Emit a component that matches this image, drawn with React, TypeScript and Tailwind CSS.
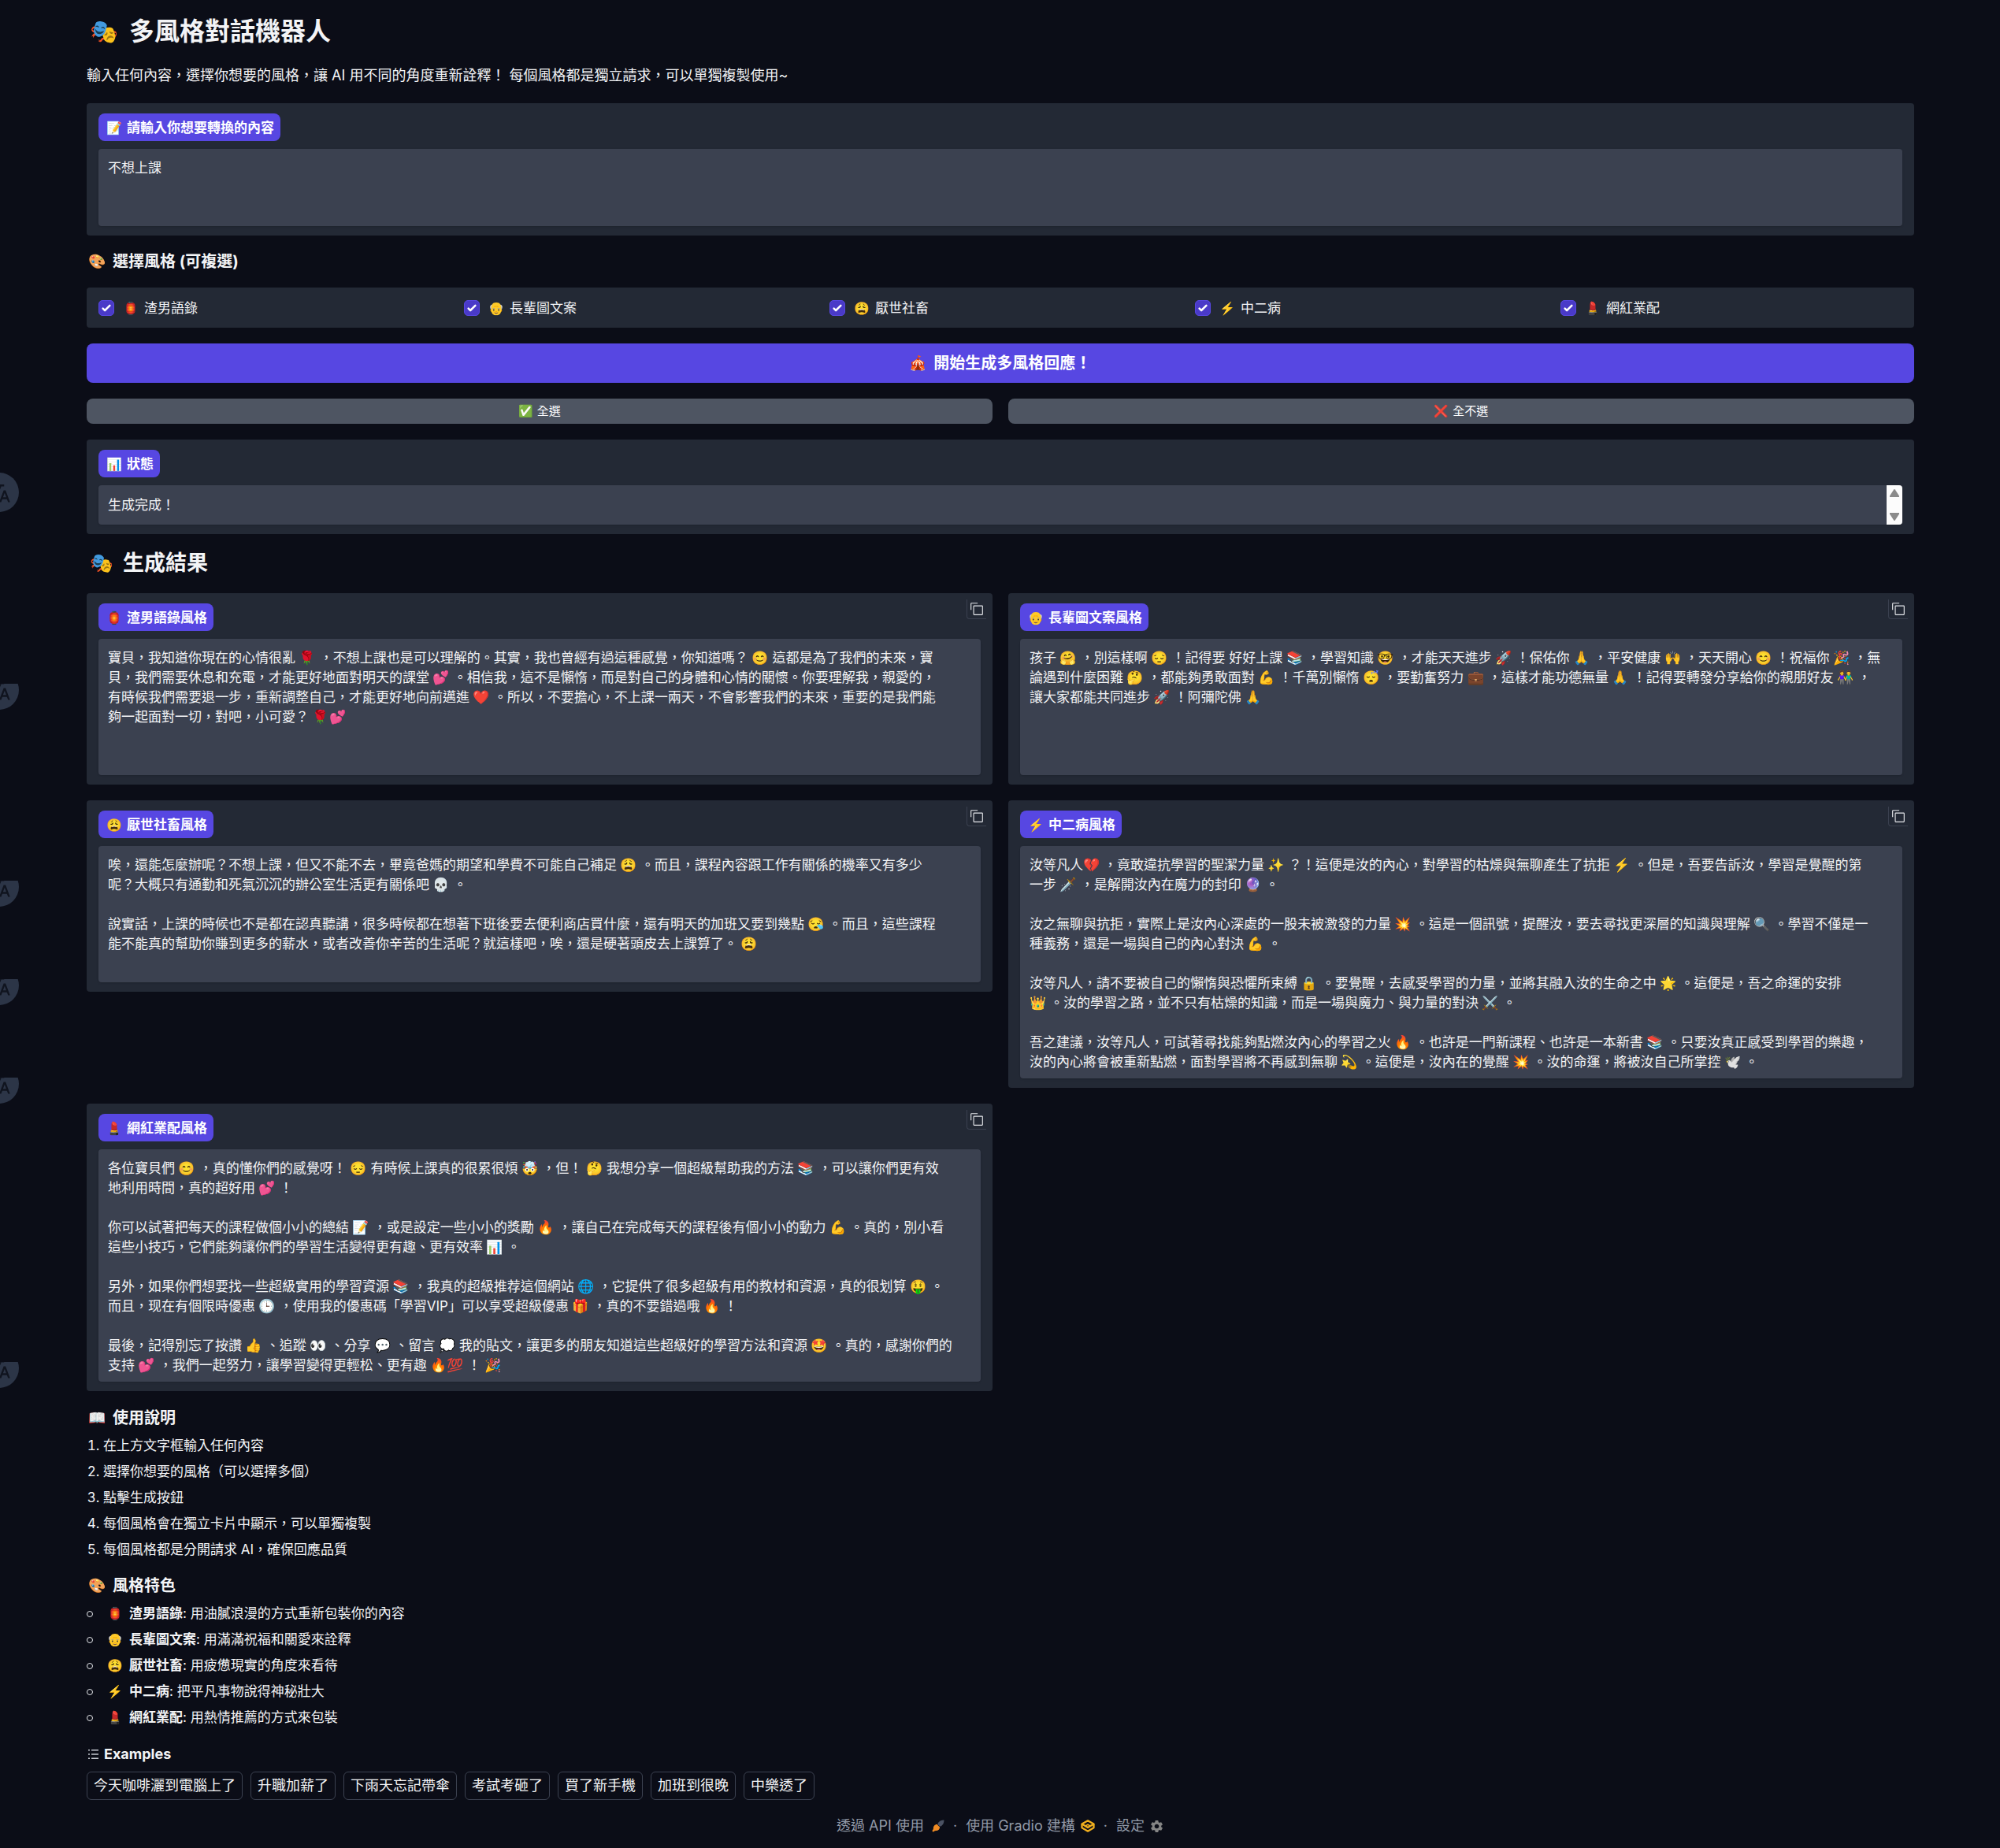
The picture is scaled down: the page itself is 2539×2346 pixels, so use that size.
import type { ReactNode } from 'react';
import { MdTranslate, MdSettings } from 'react-icons/md';

const STYLES = [
  { emoji: '🏮', name: '渣男語錄', note: '用油膩浪漫的方式重新包裝你的內容' },
  { emoji: '👴', name: '長輩圖文案', note: '用滿滿祝福和關愛來詮釋' },
  { emoji: '😩', name: '厭世社畜', note: '用疲憊現實的角度來看待' },
  { emoji: '⚡', name: '中二病', note: '把平凡事物說得神秘壯大' },
  { emoji: '💄', name: '網紅業配', note: '用熱情推薦的方式來包裝' },
];

const RESULTS = [
  `寶貝，我知道你現在的心情很亂 🌹 ，不想上課也是可以理解的。其實，我也曾經有過這種感覺，你知道嗎？ 😊 這都是為了我們的未來，寶
貝，我們需要休息和充電，才能更好地面對明天的課堂 💕 。相信我，這不是懶惰，而是對自己的身體和心情的關懷。你要理解我，親愛的，
有時候我們需要退一步，重新調整自己，才能更好地向前邁進 ❤️ 。所以，不要擔心，不上課一兩天，不會影響我們的未來，重要的是我們能
夠一起面對一切，對吧，小可愛？ 🌹💕`,
  `孩子 🤗 ，別這樣啊 😔 ！記得要 好好上課 📚 ，學習知識 🤓 ，才能天天進步 🚀 ！保佑你 🙏 ，平安健康 🙌 ，天天開心 😊 ！祝福你 🎉 ，無
論遇到什麼困難 🤔 ，都能夠勇敢面對 💪 ！千萬別懶惰 😴 ，要勤奮努力 💼 ，這樣才能功德無量 🙏 ！記得要轉發分享給你的親朋好友 👫 ，
讓大家都能共同進步 🚀 ！阿彌陀佛 🙏`,
  `唉，還能怎麼辦呢？不想上課，但又不能不去，畢竟爸媽的期望和學費不可能自己補足 😩 。而且，課程內容跟工作有關係的機率又有多少
呢？大概只有通勤和死氣沉沉的辦公室生活更有關係吧 💀 。

說實話，上課的時候也不是都在認真聽講，很多時候都在想著下班後要去便利商店買什麼，還有明天的加班又要到幾點 😪 。而且，這些課程
能不能真的幫助你賺到更多的薪水，或者改善你辛苦的生活呢？就這樣吧，唉，還是硬著頭皮去上課算了。 😩`,
  `汝等凡人💔 ，竟敢違抗學習的聖潔力量 ✨ ？！這便是汝的內心，對學習的枯燥與無聊產生了抗拒 ⚡ 。但是，吾要告訴汝，學習是覺醒的第
一步 🗡️ ，是解開汝內在魔力的封印 🔮 。

汝之無聊與抗拒，實際上是汝內心深處的一股未被激發的力量 💥 。這是一個訊號，提醒汝，要去尋找更深層的知識與理解 🔍 。學習不僅是一
種義務，還是一場與自己的內心對決 💪 。

汝等凡人，請不要被自己的懶惰與恐懼所束縛 🔒 。要覺醒，去感受學習的力量，並將其融入汝的生命之中 🌟 。這便是，吾之命運的安排
👑 。汝的學習之路，並不只有枯燥的知識，而是一場與魔力、與力量的對決 ⚔️ 。

吾之建議，汝等凡人，可試著尋找能夠點燃汝內心的學習之火 🔥 。也許是一門新課程、也許是一本新書 📚 。只要汝真正感受到學習的樂趣，
汝的內心將會被重新點燃，面對學習將不再感到無聊 💫 。這便是，汝內在的覺醒 💥 。汝的命運，將被汝自己所掌控 🕊️ 。`,
  `各位寶貝們 😊 ，真的懂你們的感覺呀！ 😔 有時候上課真的很累很煩 🤯 ，但！ 🤔 我想分享一個超級幫助我的方法 📚 ，可以讓你們更有效
地利用時間，真的超好用 💕 ！

你可以試著把每天的課程做個小小的總結 📝 ，或是設定一些小小的獎勵 🔥 ，讓自己在完成每天的課程後有個小小的動力 💪 。真的，別小看
這些小技巧，它們能夠讓你們的學習生活變得更有趣、更有效率 📊 。

另外，如果你們想要找一些超級實用的學習資源 📚 ，我真的超級推荐這個網站 🌐 ，它提供了很多超級有用的教材和資源，真的很划算 🤑 。
而且，现在有個限時優惠 🕒 ，使用我的優惠碼「學習VIP」可以享受超級優惠 🎁 ，真的不要錯過哦 🔥 ！

最後，記得別忘了按讚 👍 、追蹤 👀 、分享 💬 、留言 💭 我的貼文，讓更多的朋友知道這些超級好的學習方法和資源 🤩 。真的，感謝你們的
支持 💕 ，我們一起努力，讓學習變得更輕松、更有趣 🔥💯 ！ 🎉`,
];

const STEPS = [
  '在上方文字框輸入任何內容',
  '選擇你想要的風格（可以選擇多個）',
  '點擊生成按鈕',
  '每個風格會在獨立卡片中顯示，可以單獨複製',
  '每個風格都是分開請求 AI，確保回應品質',
];

const EXAMPLES = ['今天咖啡灑到電腦上了', '升職加薪了', '下雨天忘記帶傘', '考試考砸了', '買了新手機', '加班到很晚', '中樂透了'];

function Emoji({ children }: { children: ReactNode }) {
  return <span className="flex w-6 shrink-0 justify-center text-[16px] font-normal">{children}</span>;
}

function Card({ id, emoji, label, children, copy }: { id: string; emoji: string; label: string; children: ReactNode; copy?: boolean }) {
  return (
    <div className="relative rounded bg-[#232935] px-[15px] pt-[13px] pb-3">
      <label htmlFor={id} className="flex h-[35px] w-fit items-center gap-1 rounded-lg bg-[#5747e2] px-2 text-[17px] leading-[24px] font-bold text-white">
        <Emoji>{emoji}</Emoji>
        {label}
      </label>
      <div className="mt-[10px] flex overflow-hidden rounded bg-[#3b4150] shadow-sm">{children}</div>
      {copy && (
        <button type="button" aria-label="複製" className="absolute top-2 right-2 flex size-[25px] items-center justify-center rounded-bl border-b border-l border-[#3b4150]">
          <svg viewBox="0 0 32 32" className="size-[18px] fill-[#e5e7eb]">
            <path d="M28,10V28H10V10H28m0-2H10a2,2,0,0,0-2,2V28a2,2,0,0,0,2,2H28a2,2,0,0,0,2-2V10a2,2,0,0,0-2-2Z" />
            <path d="M4,18H2V4A2,2,0,0,1,4,2H18V4H4Z" />
          </svg>
        </button>
      )}
    </div>
  );
}

function SubHeading({ emoji, children }: { emoji: string; children: ReactNode }) {
  return (
    <h3 className="flex items-center gap-[5px] text-[20px] leading-[24px] font-bold">
      <span className="flex w-7 justify-center text-[18px] font-normal">{emoji}</span>
      {children}
    </h3>
  );
}

function TranslateBadge({ place, clipped }: { place: string; clipped?: boolean }) {
  return (
    <div className={`absolute left-0 flex w-6 items-end justify-end overflow-hidden ${clipped ? 'h-[33px]' : 'h-[50px]'} ${place}`}>
      <span className="flex size-[50px] shrink-0 items-center justify-center rounded-full bg-[#2c3547] text-[#10141f]">
        <MdTranslate size={30} />
      </span>
    </div>
  );
}

export default function App() {
  return (
    <div className="relative min-h-screen overflow-hidden bg-[#0b0d17] pt-5 pr-[109px] pb-4 pl-[110px] font-['Inter','Noto_Sans_CJK_TC','Noto_Color_Emoji',sans-serif] text-[17px] leading-[24px] text-[#f3f4f6]">
      <TranslateBadge place="top-[600px]" />
      <TranslateBadge clipped place="top-[868px]" />
      <TranslateBadge clipped place="top-[1118px]" />
      <TranslateBadge clipped place="top-[1243px]" />
      <TranslateBadge clipped place="top-[1368px]" />
      <TranslateBadge clipped place="top-[1729px]" />

      <h1 className="flex items-center gap-[10px] text-[32px] leading-[40px] font-bold">
        <span className="flex w-11 justify-center text-[29px] font-normal">🎭</span>
        多風格對話機器人
      </h1>
      <p className="mt-6 text-[18px]">輸入任何內容，選擇你想要的風格，讓 AI 用不同的角度重新詮釋！ 每個風格都是獨立請求，可以單獨複製使用~</p>

      <div className="mt-[23px]">
        <Card id="source" emoji="📝" label="請輸入你想要轉換的內容">
          <textarea id="source" defaultValue="不想上課" className="h-[98px] flex-1 resize-none overflow-hidden px-3 pt-3 pb-2 leading-[25px] outline-none" />
        </Card>
      </div>

      <div className="mt-[21px]">
        <SubHeading emoji="🎨">選擇風格 (可複選)</SubHeading>
      </div>
      <div className="mt-[21px] grid h-[51px] grid-cols-5 items-center rounded bg-[#232935]">
        {STYLES.map((s) => (
          <label key={s.name} className="flex items-center pl-[15px]">
            <span className="grid size-5 place-items-center">
              <input type="checkbox" defaultChecked className="peer col-start-1 row-start-1 size-5 appearance-none rounded-[5px] border border-[#5747e2] checked:bg-[#4a3ac8]" />
              <svg viewBox="0 0 16 16" className="pointer-events-none col-start-1 row-start-1 hidden size-5 fill-white peer-checked:block">
                <path d="M12.207 4.793a1 1 0 010 1.414l-5 5a1 1 0 01-1.414 0l-2-2a1 1 0 011.414-1.414L6.5 9.086l4.293-4.293a1 1 0 011.414 0z" />
              </svg>
            </span>
            <span className="ml-[9px] flex items-center gap-[5px]">
              <Emoji>{s.emoji}</Emoji>
              {s.name}
            </span>
          </label>
        ))}
      </div>

      <button type="button" className="mt-5 flex h-[50px] w-full items-center justify-center gap-2 rounded-lg bg-[#5747e2] text-[20px] font-bold text-white">
        <span className="text-[18px] font-normal">🎪</span>
        開始生成多風格回應！
      </button>
      <div className="mt-5 grid grid-cols-2 gap-5 text-[15px] text-white">
        <button type="button" className="flex h-8 items-center justify-center gap-[5px] rounded-lg bg-[#4e5562]">
          <span>✅</span>全選
        </button>
        <button type="button" className="flex h-8 items-center justify-center gap-[5px] rounded-lg bg-[#4e5562]">
          <span>❌</span>全不選
        </button>
      </div>

      <div className="mt-5">
        <Card id="status" emoji="📊" label="狀態">
          <textarea id="status" readOnly defaultValue="生成完成！" className="h-[50px] flex-1 resize-none overflow-hidden px-3 pt-[13px] pb-2 leading-[25px] outline-none" />
          <span aria-hidden="true" className="flex w-5 flex-col items-center justify-between bg-[#fcfcfc] py-[5px]">
            <svg viewBox="0 0 12 10" className="h-[10px] w-3 fill-[#8b8b8b]"><path d="M5.2 .6a1 1 0 011.6 0L12 8.6V10H0V8.6z" /></svg>
            <svg viewBox="0 0 12 10" className="h-[10px] w-3 fill-[#8b8b8b]"><path d="M5.2 9.4a1 1 0 001.6 0L12 1.4V0H0v1.4z" /></svg>
          </span>
        </Card>
      </div>

      <h2 className="mt-[21px] flex items-center gap-2 text-[27px] leading-[32px] font-bold">
        <span className="flex w-[38px] justify-center text-[24px] font-normal">🎭</span>
        生成結果
      </h2>
      <div className="mt-[22px] grid grid-cols-2 items-start gap-5">
        {STYLES.map((s, i) => (
          <Card key={s.name} id={`result-${i}`} emoji={s.emoji} label={`${s.name}風格`} copy>
            <textarea
              id={`result-${i}`}
              readOnly
              defaultValue={RESULTS[i]}
              className="field-sizing-content min-h-[173px] w-full resize-none overflow-hidden px-3 pt-3 pb-2 leading-[25px] outline-none"
            />
          </Card>
        ))}
      </div>

      <div className="mt-[22px]">
        <SubHeading emoji="📖">使用說明</SubHeading>
      </div>
      <ol className="mt-[7px] list-decimal pl-[21px] leading-[33px]">
        {STEPS.map((s) => (
          <li key={s}>{s}</li>
        ))}
      </ol>
      <div className="mt-[17px]">
        <SubHeading emoji="🎨">風格特色</SubHeading>
      </div>
      <ul className="mt-[7px] leading-[33px]">
        {STYLES.map((s) => (
          <li key={s.name} className="flex items-center before:mr-4 before:size-2 before:rounded-full before:border before:border-[#e5e7eb] before:content-['']">
            <Emoji>{s.emoji}</Emoji>
            <span className="ml-[6px]">
              <strong>{s.name}</strong>: {s.note}
            </span>
          </li>
        ))}
      </ul>

      <div className="mt-[18px] flex items-center gap-[6px] text-[18px] font-bold">
        <svg viewBox="0 0 16 16" className="size-4 fill-[#c4c8d0]">
          <path d="M2 2h2v1.400H2zM6 2h9v1.400H6zM2 7.300h2v1.400H2zM6 7.300h9v1.400H6zM2 12.600h2V14H2zM6 12.600h9V14H6z" />
        </svg>
        Examples
      </div>
      <div className="mt-[10px] flex flex-wrap gap-[10px]">
        {EXAMPLES.map((e) => (
          <button type="button" key={e} className="h-9 rounded-md border border-[#3b4150] px-2 text-[18px] leading-[24px]">
            {e}
          </button>
        ))}
      </div>

      <footer className="mt-[21px] flex items-center justify-center gap-[11px] text-[18px] text-[#9199a7]">
        <button type="button" className="flex items-center gap-[10px]">
          透過 API 使用
          <svg viewBox="0 0 16 16" className="size-4">
            <path d="M15.500.5c-3.600 0-6.300 1.400-7.700 3.800-.4.800-.4 1.600.1 2.200l1.700 1.700c.6.500 1.400.5 2.200 0 2.300-1.500 3.700-4.100 3.700-7.700z" fill="#4b5263" />
            <path d="M6.800 6C4.200 5.700 1.800 8 1.900 11c0 1.300-.9 2.200-1.600 3.200l1.500 1.500c1-.7 1.900-1.600 3.200-1.600 3 .1 5.300-2.300 5-4.900L8.200 7.800z" fill="#ef8b24" />
          </svg>
        </button>
        <span>·</span>
        <a href="#gradio" className="flex items-center gap-[7px]">
          使用 Gradio 建構
          <svg viewBox="0 0 18 16" className="h-4 w-[18px] fill-none stroke-[#f2b01e]" strokeWidth="2.300" strokeLinejoin="round">
            <path d="M9 1.300L1.500 5.600 9 10l7.500-4.400z" />
            <path d="M1.500 6v4.300L9 14.700l7.500-4.400V6" />
            <path d="M5.500 8.300L9 6.300l3 1.700" strokeWidth="1.600" />
          </svg>
        </a>
        <span>·</span>
        <button type="button" className="flex items-center gap-[6px]">
          設定
          <MdSettings size={19} className="text-[#858585]" />
        </button>
      </footer>
    </div>
  );
}
